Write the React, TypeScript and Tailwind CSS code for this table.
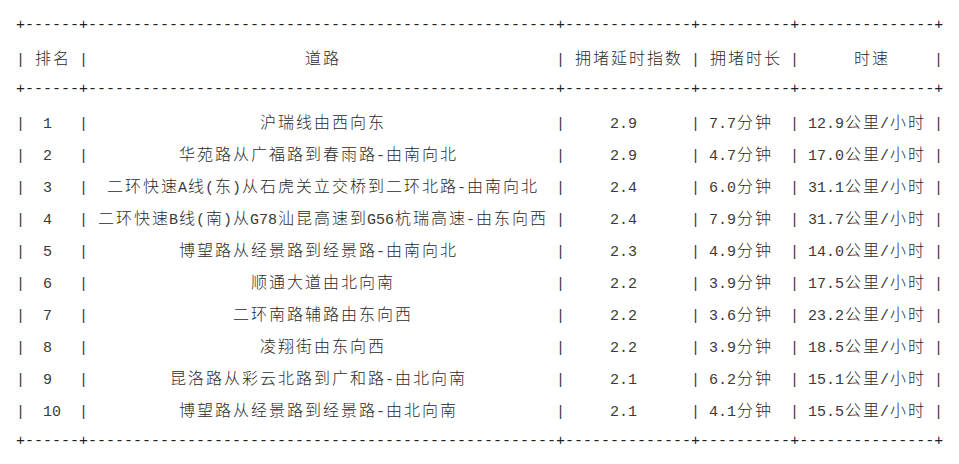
import React from "react";

const widths = [4, 50, 12, 8, 13];

const header = ["排名", "道路", "拥堵延时指数", "拥堵时长", "时速"];
const rows: string[][] = [
  ["1", "沪瑞线由西向东", "2.9", "7.7分钟", "12.9公里/小时"],
  ["2", "华苑路从广福路到春雨路-由南向北", "2.9", "4.7分钟", "17.0公里/小时"],
  ["3", "二环快速A线(东)从石虎关立交桥到二环北路-由南向北", "2.4", "6.0分钟", "31.1公里/小时"],
  ["4", "二环快速B线(南)从G78汕昆高速到G56杭瑞高速-由东向西", "2.4", "7.9分钟", "31.7公里/小时"],
  ["5", "博望路从经景路到经景路-由南向北", "2.3", "4.9分钟", "14.0公里/小时"],
  ["6", "顺通大道由北向南", "2.2", "3.9分钟", "17.5公里/小时"],
  ["7", "二环南路辅路由东向西", "2.2", "3.6分钟", "23.2公里/小时"],
  ["8", "凌翔街由东向西", "2.2", "3.9分钟", "18.5公里/小时"],
  ["9", "昆洛路从彩云北路到广和路-由北向南", "2.1", "6.2分钟", "15.1公里/小时"],
  ["10", "博望路从经景路到经景路-由北向南", "2.1", "4.1分钟", "15.5公里/小时"],
];

const isWide = (c: string) => c.charCodeAt(0) > 0x7f;
const dw = (s: string) => Array.from(s).reduce((a, c) => a + (isWide(c) ? 2 : 1), 0);

function center(text: string, length: number) {
  const tl = dw(text);
  const excess = length - tl;
  const h = Math.floor(excess / 2);
  if (excess % 2) {
    if (tl % 2) return " ".repeat(h) + text + " ".repeat(h + 1);
    return " ".repeat(h + 1) + text + " ".repeat(h);
  }
  return " ".repeat(h) + text + " ".repeat(h);
}

const rule = "+" + widths.map((w) => "-".repeat(w + 2)).join("+") + "+";
const row = (cells: string[]) =>
  "|" + cells.map((c, i) => " " + center(c, widths[i]) + " ").join("|") + "|";

type Seg = { wide: boolean; text: string };
function segs(line: string): Seg[] {
  const out: Seg[] = [];
  for (const c of Array.from(line)) {
    if (isWide(c)) out.push({ wide: true, text: c });
    else if (out.length && !out[out.length - 1].wide) out[out.length - 1].text += c;
    else out.push({ wide: false, text: c });
  }
  return out;
}

function RuleLine() {
  return (
    <div className="h-[32px] leading-[32px] whitespace-pre text-[15px] font-['Liberation_Mono',monospace]">
      <span className="inline-block align-[-1px] text-[#222]" style={{ width: rule.length * 9 }}>
        {rule}
      </span>
    </div>
  );
}

function TextLine({ text }: { text: string }) {
  return (
    <div className="h-[32px] leading-[32px] whitespace-pre text-[15px] font-['Liberation_Mono',monospace]">
      {segs(text).map((s, i) =>
        s.wide ? (
          <span
            key={i}
            className="inline-block align-[2px] w-[18px] text-center text-[16px] font-light text-[#2a2a2a] font-['Noto_Sans_CJK_SC',sans-serif]"
          >
            {s.text}
          </span>
        ) : (
          <span
            key={i}
            className="inline-block align-[2px] text-[#3a3a3a]"
            style={{ width: s.text.length * 9 }}
          >
            {s.text}
          </span>
        )
      )}
    </div>
  );
}

export default function App() {
  return (
    <div className="w-[959px] h-[464px] bg-white pt-[9px] pl-[16px] overflow-hidden">
      <RuleLine />
      <TextLine text={row(header)} />
      <RuleLine />
      {rows.map((r, i) => (
        <TextLine key={i} text={row(r)} />
      ))}
      <RuleLine />
    </div>
  );
}
